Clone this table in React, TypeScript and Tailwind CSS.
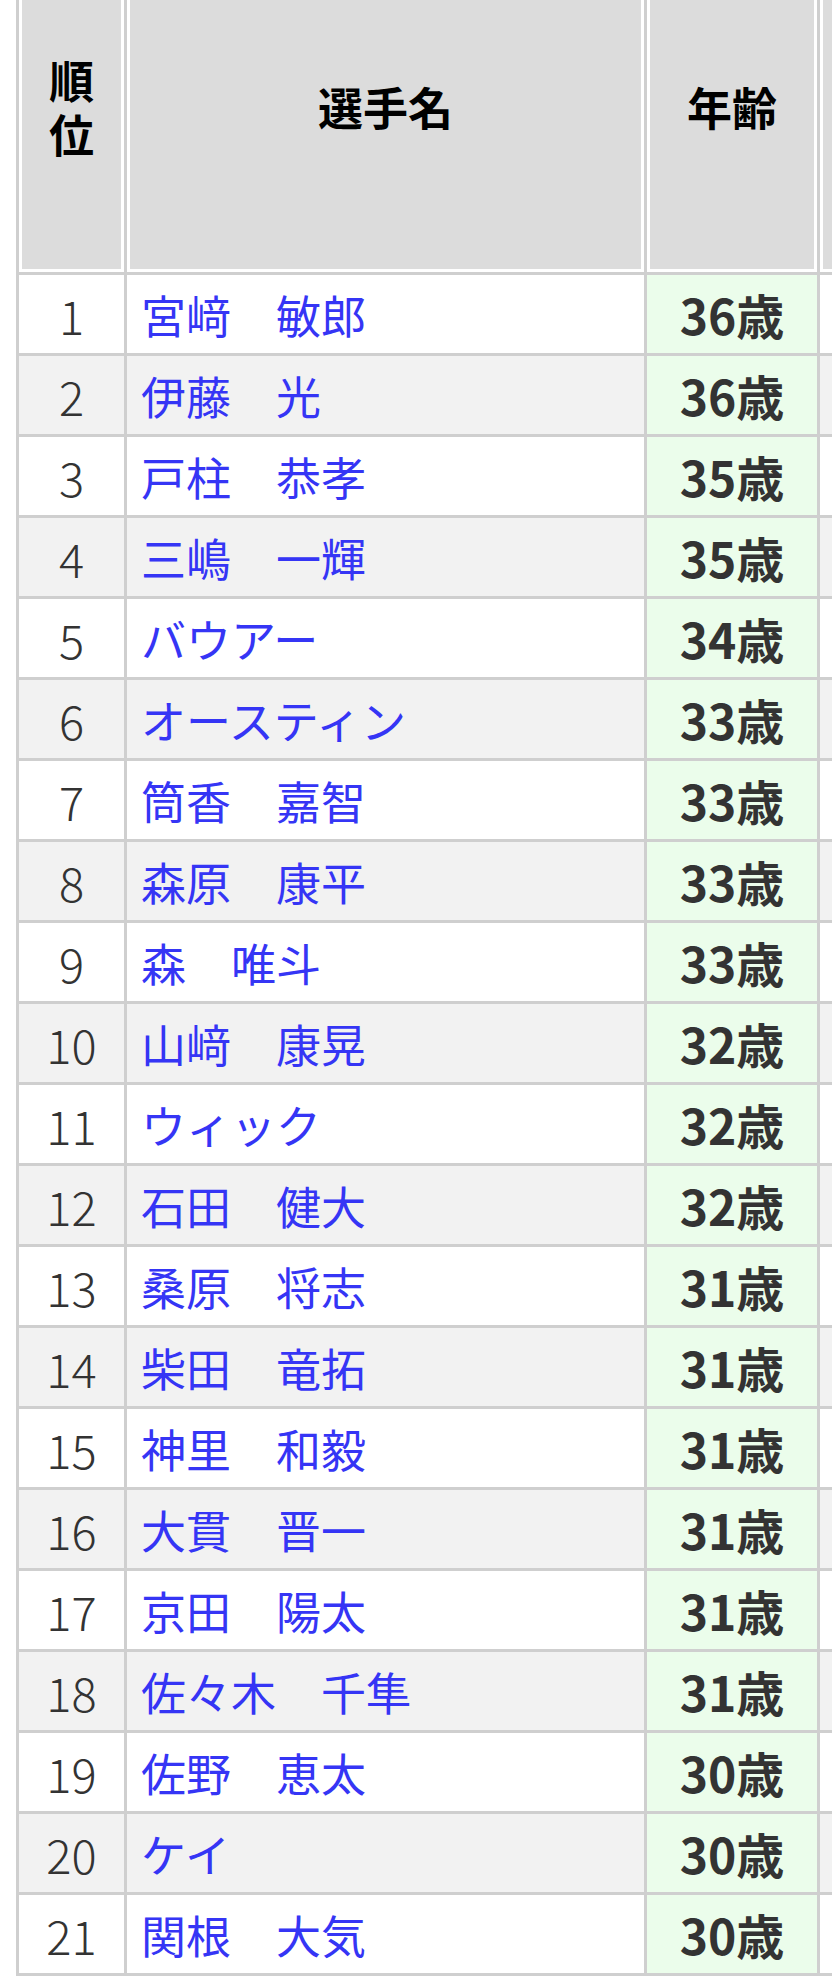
import React from "react"

type Player = { rank: number; name: string; age: number }

const players: Player[] = [
  { rank: 1, name: "宮﨑　敏郎", age: 36 },
  { rank: 2, name: "伊藤　光", age: 36 },
  { rank: 3, name: "戸柱　恭孝", age: 35 },
  { rank: 4, name: "三嶋　一輝", age: 35 },
  { rank: 5, name: "バウアー", age: 34 },
  { rank: 6, name: "オースティン", age: 33 },
  { rank: 7, name: "筒香　嘉智", age: 33 },
  { rank: 8, name: "森原　康平", age: 33 },
  { rank: 9, name: "森　唯斗", age: 33 },
  { rank: 10, name: "山﨑　康晃", age: 32 },
  { rank: 11, name: "ウィック", age: 32 },
  { rank: 12, name: "石田　健大", age: 32 },
  { rank: 13, name: "桑原　将志", age: 31 },
  { rank: 14, name: "柴田　竜拓", age: 31 },
  { rank: 15, name: "神里　和毅", age: 31 },
  { rank: 16, name: "大貫　晋一", age: 31 },
  { rank: 17, name: "京田　陽太", age: 31 },
  { rank: 18, name: "佐々木　千隼", age: 31 },
  { rank: 19, name: "佐野　恵太", age: 30 },
  { rank: 20, name: "ケイ", age: 30 },
  { rank: 21, name: "関根　大気", age: 30 },
]

const font = { fontFamily: '"Noto Sans CJK JP", "Noto Sans", sans-serif' }

export default function App() {
  return (
    <div className="w-[832px] h-[1978px] overflow-hidden bg-white pl-[16px]" style={font}>
      {/* ランキング表（上端はスクロールで切れている） */}
      <table className="-mt-[58px] table-fixed border-separate border-spacing-0 w-[1020px]">
        <colgroup>
          <col className="w-[111px]" />
          <col className="w-[520px]" />
          <col className="w-[173px]" />
          <col className="w-[216px]" />
        </colgroup>
        <thead>
          <tr>
            <th className="h-[333px] border-l-[3px] border-r-[3px] border-b-[3px] border-[#cfcfcf] bg-[#dcdcdc] shadow-[inset_0_0_0_3px_#ffffff] text-[45px] leading-[54px] font-bold text-black align-middle px-[12px]">
              順位
            </th>
            <th className="border-r-[3px] border-b-[3px] border-[#cfcfcf] bg-[#dcdcdc] shadow-[inset_0_0_0_3px_#ffffff] text-[45px] leading-[54px] font-bold text-black align-middle">
              選手名
            </th>
            <th className="border-r-[3px] border-b-[3px] border-[#cfcfcf] bg-[#dcdcdc] shadow-[inset_0_0_0_3px_#ffffff] text-[45px] leading-[54px] font-bold text-black align-middle">
              年齢
            </th>
            <th className="border-r-[3px] border-b-[3px] border-[#cfcfcf] bg-[#dcdcdc] shadow-[inset_0_0_0_3px_#ffffff]" />
          </tr>
        </thead>
        <tbody>
          {players.map((p) => (
            <tr key={p.rank} className={p.rank % 2 === 0 ? "bg-[#f2f2f2]" : "bg-white"}>
              <td className="h-[81px] border-l-[3px] border-r-[3px] border-b-[3px] border-[#cfcfcf] text-center text-[47px] leading-none font-light text-[#333333] align-middle">
                {p.rank}
              </td>
              <td className="border-r-[3px] border-b-[3px] border-[#cfcfcf] pl-[14px] text-[45px] leading-none text-[#3535f5] align-middle whitespace-nowrap">
                {p.name}
              </td>
              <td className="border-r-[3px] border-b-[3px] border-[#cfcfcf] bg-[#ebfdeb] text-center text-[48px] leading-none font-bold text-[#333333] align-middle">
                {p.age}歳
              </td>
              <td className="border-r-[3px] border-b-[3px] border-[#cfcfcf]" />
            </tr>
          ))}
        </tbody>
      </table>
    </div>
  )
}
